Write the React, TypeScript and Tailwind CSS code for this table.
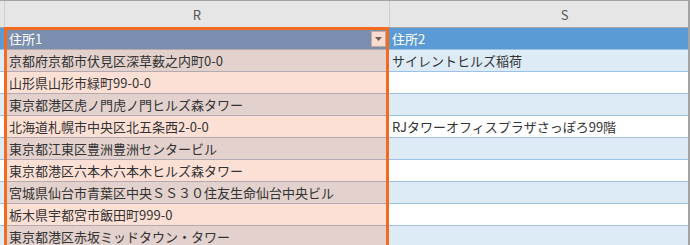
const rows: [string, string][] = [
  ['京都府京都市伏見区深草薮之内町0-0', 'サイレントヒルズ稲荷'],
  ['山形県山形市緑町99-0-0', ''],
  ['東京都港区虎ノ門虎ノ門ヒルズ森タワー', ''],
  ['北海道札幌市中央区北五条西2-0-0', 'RJタワーオフィスプラザさっぽろ99階'],
  ['東京都江東区豊洲豊洲センタービル', ''],
  ['東京都港区六本木六本木ヒルズ森タワー', ''],
  ['宮城県仙台市青葉区中央ＳＳ３０住友生命仙台中央ビル', ''],
  ['栃木県宇都宮市飯田町999-0', ''],
  ['東京都港区赤坂ミッドタウン・タワー', ''],
]

function DataRow({ r, s, banded }: { r: string; s: string; banded: boolean }) {
  return (
    <div className="flex h-[22px] shrink-0">
      <div
        className={`w-[5px] shrink-0 border-b border-[#9bc2e6] ${banded ? 'bg-[#ddebf7]' : 'bg-white'}`}
      />
      <div
        className={`w-[384px] shrink-0 border-b border-[#b3a9ae] pl-[4px] leading-[21px] whitespace-nowrap overflow-hidden ${
          banded ? 'bg-[#e2d1cc]' : 'bg-[#fce0d5]'
        }`}
      >
        {r}
      </div>
      <div
        className={`w-[350px] shrink-0 border-b border-[#9bc2e6] pl-[3px] leading-[21px] whitespace-nowrap ${
          banded ? 'bg-[#ddebf7]' : 'bg-white'
        }`}
      >
        {s}
      </div>
    </div>
  )
}

export default function App() {
  return (
    <div className="relative w-[690px] h-[245px] overflow-hidden bg-white border-t border-r-2 border-[#a3a3a3] font-['Noto_Sans_CJK_JP',sans-serif] text-[13px] text-[#333]">
      {/* column letters */}
      <div className="flex h-[27px] border-b border-[#a3a3a3] bg-[#e6e6e6] text-[#555]">
        <div className="w-[5px] shrink-0 border-r border-[#cfcfcf]" />
        <div className="w-[384px] shrink-0 flex items-center justify-center pt-[2px]">R</div>
        <div className="w-[350px] shrink-0 border-l border-[#cfcfcf] flex items-center justify-center pt-[2px]">
          S
        </div>
      </div>

      {/* table header */}
      <div className="flex h-[22px] text-white">
        <div className="w-[5px] shrink-0 border-b border-[#9bc2e6] bg-[#5b9bd5]" />
        <div className="w-[384px] shrink-0 border-b border-[#b3a9ae] bg-[#7a8eb0] pl-[4px] pr-[3px] flex items-center justify-between">
          <span className="leading-[21px]">住所1</span>
          <span className="w-[15px] h-[16px] border border-[#c4a89f] bg-[#f7dccf] flex items-center justify-center">
            <svg width="7" height="4" viewBox="0 0 7 4">
              <path d="M0 0h7L3.5 4z" fill="#6e5f5b" />
            </svg>
          </span>
        </div>
        <div className="w-[350px] shrink-0 border-b border-[#9bc2e6] bg-[#5b9bd5] pl-[3px] leading-[21px]">
          住所2
        </div>
      </div>

      {rows.map(([r, s], i) => (
        <DataRow key={i} r={r} s={s} banded={i % 2 === 0} />
      ))}

      {/* selection frame */}
      <div className="absolute left-[4px] top-[26px] w-[385px] h-[240px] border-[3px] border-[#f26b21] pointer-events-none" />
    </div>
  )
}
